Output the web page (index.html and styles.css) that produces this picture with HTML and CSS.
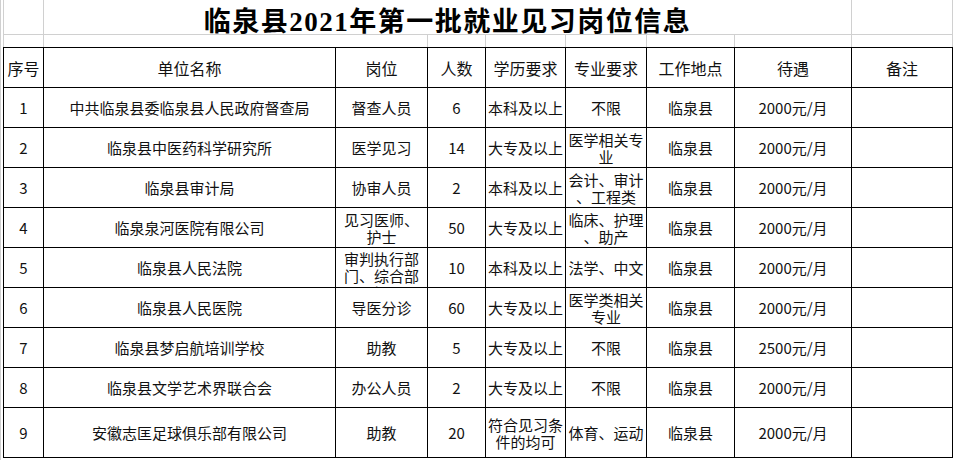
FILE: index.html
```html
<!DOCTYPE html>
<html lang="zh-CN">
<head>
<meta charset="utf-8">
<title>临泉县2021年第一批就业见习岗位信息</title>
<link rel="stylesheet" href="styles.css">
</head>
<body>
<div class="frame">
  <div class="sheet">
    <div class="cell t first"></div>
    <div class="cell t title">临泉县2021年第一批就业见习岗位信息</div>
    <div class="cell t"></div>

    <div class="cell g first"></div>
    <div class="cell g span2"></div>
    <div class="cell g"></div>
    <div class="cell g"></div>
    <div class="cell g"></div>
    <div class="cell g"></div>
    <div class="cell g"></div>
    <div class="cell g"></div>

    <div class="cell h first">序号</div>
    <div class="cell h">单位名称</div>
    <div class="cell h">岗位</div>
    <div class="cell h">人数</div>
    <div class="cell h">学历要求</div>
    <div class="cell h">专业要求</div>
    <div class="cell h">工作地点</div>
    <div class="cell h">待遇</div>
    <div class="cell h">备注</div>

    <div class="cell d first">1</div>
    <div class="cell d">中共临泉县委临泉县人民政府督查局</div>
    <div class="cell d">督查人员</div>
    <div class="cell d">6</div>
    <div class="cell d">本科及以上</div>
    <div class="cell d">不限</div>
    <div class="cell d">临泉县</div>
    <div class="cell d">2000元/月</div>
    <div class="cell d"></div>

    <div class="cell d first">2</div>
    <div class="cell d">临泉县中医药科学研究所</div>
    <div class="cell d">医学见习</div>
    <div class="cell d">14</div>
    <div class="cell d">大专及以上</div>
    <div class="cell d"><span>医学相关专<br>业</span></div>
    <div class="cell d">临泉县</div>
    <div class="cell d">2000元/月</div>
    <div class="cell d"></div>

    <div class="cell d first">3</div>
    <div class="cell d">临泉县审计局</div>
    <div class="cell d">协审人员</div>
    <div class="cell d">2</div>
    <div class="cell d">本科及以上</div>
    <div class="cell d"><span>会计、审计<br>、工程类</span></div>
    <div class="cell d">临泉县</div>
    <div class="cell d">2000元/月</div>
    <div class="cell d"></div>

    <div class="cell d first">4</div>
    <div class="cell d">临泉泉河医院有限公司</div>
    <div class="cell d"><span>见习医师、<br>护士</span></div>
    <div class="cell d">50</div>
    <div class="cell d">大专及以上</div>
    <div class="cell d"><span>临床、护理<br>、助产</span></div>
    <div class="cell d">临泉县</div>
    <div class="cell d">2000元/月</div>
    <div class="cell d"></div>

    <div class="cell d first">5</div>
    <div class="cell d">临泉县人民法院</div>
    <div class="cell d top"><span>审判执行部<br>门、综合部<br>门</span></div>
    <div class="cell d">10</div>
    <div class="cell d">本科及以上</div>
    <div class="cell d">法学、中文</div>
    <div class="cell d">临泉县</div>
    <div class="cell d">2000元/月</div>
    <div class="cell d"></div>

    <div class="cell d first">6</div>
    <div class="cell d">临泉县人民医院</div>
    <div class="cell d">导医分诊</div>
    <div class="cell d">60</div>
    <div class="cell d">大专及以上</div>
    <div class="cell d"><span>医学类相关<br>专业</span></div>
    <div class="cell d">临泉县</div>
    <div class="cell d">2000元/月</div>
    <div class="cell d"></div>

    <div class="cell d first">7</div>
    <div class="cell d">临泉县梦启航培训学校</div>
    <div class="cell d">助教</div>
    <div class="cell d">5</div>
    <div class="cell d">大专及以上</div>
    <div class="cell d">不限</div>
    <div class="cell d">临泉县</div>
    <div class="cell d">2500元/月</div>
    <div class="cell d"></div>

    <div class="cell d first">8</div>
    <div class="cell d">临泉县文学艺术界联合会</div>
    <div class="cell d">办公人员</div>
    <div class="cell d">2</div>
    <div class="cell d">大专及以上</div>
    <div class="cell d">不限</div>
    <div class="cell d">临泉县</div>
    <div class="cell d">2000元/月</div>
    <div class="cell d"></div>

    <div class="cell d first">9</div>
    <div class="cell d">安徽志匡足球俱乐部有限公司</div>
    <div class="cell d">助教</div>
    <div class="cell d">20</div>
    <div class="cell d"><span>符合见习条<br>件的均可</span></div>
    <div class="cell d">体育、运动</div>
    <div class="cell d">临泉县</div>
    <div class="cell d">2000元/月</div>
    <div class="cell d"></div>
  </div>
</div>
</body>
</html>
```
FILE: styles.css
```css
html, body {
  margin: 0;
  padding: 0;
  background: #ffffff;
}

body {
  font-family: "Noto Sans CJK SC", "Noto Sans", sans-serif;
  color: #111111;
}

.frame {
  border-left: 1px solid #d0d0d0;
  padding-left: 2px;
  height: 460px;
  box-sizing: border-box;
  overflow: hidden;
}

.sheet {
  display: grid;
  grid-template-columns: 41px 292px 92px 58px 80px 81px 88px 117px 101px;
  grid-template-rows: 35px 12px 41px repeat(8, 40px) 50px;
}

.cell {
  box-sizing: border-box;
  display: flex;
  align-items: center;
  justify-content: center;
  text-align: center;
  overflow: hidden;
  white-space: nowrap;
  min-width: 0;
}

/* title row (light gridlines) */
.t {
  border-right: 1px solid #d0d0d0;
  border-bottom: 1px solid #d0d0d0;
}

.t.first,
.g.first {
  border-left: 1px solid #d0d0d0;
}

.title {
  grid-column: span 7;
  font-family: "Liberation Serif", "Noto Sans CJK SC", serif;
  font-weight: 700;
  font-size: 27px;
  letter-spacing: 1.5px;
  color: #000;
  padding-top: 4px;
}

/* blank spacer row */
.g {
  border-right: 1px solid #d0d0d0;
}

.span2 {
  grid-column: span 2;
}

/* header row */
.h {
  border-top: 1px solid #000;
  border-bottom: 1px solid #000;
  border-right: 1px solid #000;
  font-size: 16px;
}

/* data rows */
.d {
  border-bottom: 1px solid #000;
  border-right: 1px solid #000;
  font-size: 15px;
  line-height: 17px;
}

.h.first,
.d.first {
  border-left: 1px solid #000;
}

.top {
  align-items: flex-start;
  padding-top: 2px;
}
```
